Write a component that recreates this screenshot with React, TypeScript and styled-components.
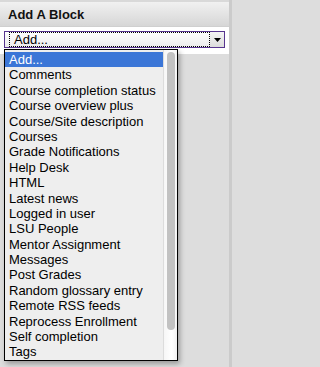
import styled, { createGlobalStyle } from "styled-components";

const GlobalStyle = createGlobalStyle`
    html, body {
        margin: 0;
        padding: 0;
        background: #dddddd;
        font-family: "Liberation Sans", Arial, sans-serif;
    }
`;

const Page = styled.div`
    position: relative;
    width: 229px;
    height: 367px;
    border-right: 3px solid #cbcbcb;
    background: #dddddd;
`;

const Header = styled.header`
    display: flex;
    align-items: center;
    height: 24px;
    padding: 0 8px;
    border-top: 2px solid #d9d9d9;
    border-bottom: 1px solid #cfcfcf;
    background: linear-gradient(#f1f1f1, #d6d6d6);
    font-size: 13px;
    font-weight: bold;
    color: #111;
`;

const Content = styled.div`
    padding: 4px 4px 6px;
    background: #ffffff;
`;

const SelectBox = styled.div`
    display: flex;
    height: 15px;
    border: 1px solid #57358f;
    background: linear-gradient(#ffffff, #ececec);
    font-size: 13px;
    color: #000;
`;

const SelectLabel = styled.div`
    flex: 1;
    display: flex;
    align-items: center;
    margin: 0 0 0 4px;
    padding-left: 4px;
    border: 1px dotted #000;
    line-height: 13px;
`;

const ArrowButton = styled.div`
    width: 14px;
    display: flex;
    align-items: center;
    justify-content: center;
    background: linear-gradient(#f4f4f4, #dcdcdc);
`;

const Popup = styled.div`
    position: absolute;
    left: 4px;
    top: 49px;
    width: 172px;
    height: 310px;
    display: flex;
    border: 1px solid #000;
    background: #eeeeee;
    box-shadow: 2px 3px 5px rgba(0, 0, 0, 0.3);
`;

const Options = styled.ul`
    flex: 1;
    margin: 0;
    padding: 2px 0 0;
    list-style: none;
    overflow: hidden;
`;

const Option = styled.li<{ $active?: boolean }>`
    height: 15.4px;
    line-height: 15.4px;
    padding-left: 4px;
    font-size: 13px;
    white-space: nowrap;
    color: ${(p) => (p.$active ? "#ffffff" : "#000000")};
    background: ${(p) => (p.$active ? "#3b76d7" : "transparent")};
`;

const Track = styled.div`
    width: 13px;
    padding: 2px 2px 0 3px;
    box-sizing: border-box;
    width: 14px;
    border-left: 1px solid #dcdcdc;
    background: linear-gradient(90deg, #f6f6f6, #ffffff 60%, #f2f2f2);
`;

const Thumb = styled.div`
    height: 278px;
    width: 8px;
    border-radius: 4px;
    background: #c2c2c2;
`;

const blocks = [
    "Add...",
    "Comments",
    "Course completion status",
    "Course overview plus",
    "Course/Site description",
    "Courses",
    "Grade Notifications",
    "Help Desk",
    "HTML",
    "Latest news",
    "Logged in user",
    "LSU People",
    "Mentor Assignment",
    "Messages",
    "Post Grades",
    "Random glossary entry",
    "Remote RSS feeds",
    "Reprocess Enrollment",
    "Self completion",
    "Tags",
];

function App() {
    return (
        <>
            <GlobalStyle />
            <Page>
                <Header>Add A Block</Header>
                <Content>
                    <SelectBox>
                        <SelectLabel>Add...</SelectLabel>
                        <ArrowButton>
                            <svg width="7" height="4" viewBox="0 0 7 4">
                                <path d="M0 0h7L3.5 4z" fill="#000" />
                            </svg>
                        </ArrowButton>
                    </SelectBox>
                </Content>
                <Popup>
                    <Options>
                        {blocks.map((name, i) => (
                            <Option key={name} $active={i === 0}>
                                {name}
                            </Option>
                        ))}
                    </Options>
                    <Track>
                        <Thumb />
                    </Track>
                </Popup>
            </Page>
        </>
    );
}

export default App;
